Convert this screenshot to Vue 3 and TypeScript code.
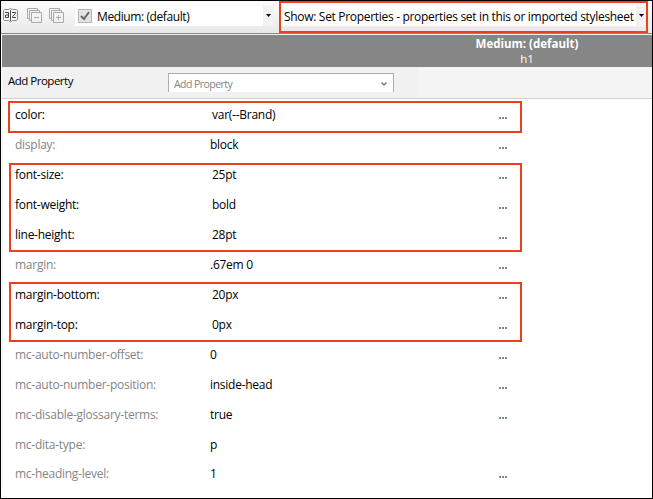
<script setup lang="ts">
interface Property {
  name: string
  value: string
  more: boolean
}
interface Group {
  kind: string
  rows: Property[]
}

const row = (name: string, value: string, more = true): Property => ({ name, value, more })

const groups: Group[] = [
  { kind: 'marked first', rows: [row('color:', 'var(--Brand)')] },
  { kind: 'plain', rows: [row('display:', 'block')] },
  {
    kind: 'marked second',
    rows: [row('font-size:', '25pt'), row('font-weight:', 'bold'), row('line-height:', '28pt')],
  },
  { kind: 'plain', rows: [row('margin:', '.67em 0')] },
  { kind: 'marked third', rows: [row('margin-bottom:', '20px'), row('margin-top:', '0px')] },
  {
    kind: 'plain',
    rows: [
      row('mc-auto-number-offset:', '0'),
      row('mc-auto-number-position:', 'inside-head'),
      row('mc-disable-glossary-terms:', 'true'),
      row('mc-dita-type:', 'p', false),
      row('mc-heading-level:', '1'),
    ],
  },
]
</script>

<template>
  <div class="window">
    <div class="toolbar">
      <svg class="icon sort" width="15" height="15" viewBox="0 0 15 15">
        <path d="M5.500 1.500h-4l-1 1v9l1 1h4l2 1.500 2-1.500h4l1-1v-9l-1-1h-4L7.500.500z" fill="#f4f4f4" stroke="#8c8c8c" />
        <path d="M7.500 2v11" stroke="#555" />
        <path d="M2 4.500h3.500v5h-3v-2.500h3M9 4.500h3.500v.8L9.500 8.700v.8h3.500" fill="none" stroke="#444" />
      </svg>
      <svg class="icon collapse" width="16" height="16" viewBox="0 0 16 16" fill="none" stroke="#aaa">
        <path d="M3 10.500H.500v-10h10V3M5 12.500H2.500v-10h10V5" />
        <path d="M4.500 4.500h10v10h-10zM7 9.500h5" />
      </svg>
      <svg class="icon expand" width="16" height="16" viewBox="0 0 16 16" fill="none" stroke="#aaa">
        <path d="M3 10.500H.500v-10h10V3M5 12.500H2.500v-10h10V5" />
        <path d="M4.500 4.500h10v10h-10zM7 9.500h5M9.500 7v5" />
      </svg>
      <div class="medium">
        <svg class="check" width="14" height="14" viewBox="0 0 14 14">
          <rect x=".5" y=".5" width="13" height="13" fill="#e3e3e3" stroke="#b5b5b5" />
          <path d="M3 7l3 3 5-7" fill="none" stroke="#666" stroke-width="2" />
        </svg>
        <span class="label">Medium: (default)</span>
        <span class="drop"><svg width="5" height="3" viewBox="0 0 5 3"><path d="M0 0h5L2.500 3z" /></svg></span>
      </div>
      <div class="show">
        <div class="field">
          <span class="label">Show: Set Properties - properties set in this or imported stylesheet</span>
          <span class="drop"><svg width="5" height="3" viewBox="0 0 5 3"><path d="M0 0h5L2.500 3z" /></svg></span>
        </div>
      </div>
    </div>

    <div class="header">
      <div class="heading">
        <b>Medium: (default)</b>
        <span>h1</span>
      </div>
    </div>

    <div class="add">
      <span class="add-label">Add Property</span>
      <div class="combo">
        <span>Add Property</span>
        <svg width="6" height="4" viewBox="0 0 6 4"><path d="M.5.5L3 3 5.500.5" fill="none" stroke="#666" stroke-width="1.200" /></svg>
      </div>
      <div class="add-rest"></div>
    </div>

    <div class="list">
      <div v-for="(group, i) in groups" :key="i" class="group" :class="group.kind">
        <div v-for="item in group.rows" :key="item.name" class="row">
          <span class="name">{{ item.name }}</span>
          <span class="value">{{ item.value }}</span>
          <span v-if="item.more" class="more"><i></i><i></i><i></i></span>
        </div>
      </div>
    </div>
  </div>
</template>

<style>
body { margin: 0; background: #fff; }
</style>

<style scoped>
.window {
  box-sizing: border-box;
  width: 653px;
  height: 499px;
  border: 1px solid #000;
  background: #fff;
  overflow: hidden;
  font: 12px/16px "Open Sans", "Noto Sans", sans-serif;
  letter-spacing: -0.26px;
  color: #000;
}
svg { display: block; flex: none; }
.toolbar {
  box-sizing: border-box;
  height: 34px;
  display: flex;
  align-items: flex-start;
  background: linear-gradient(#fdfdfd, #e8e8e8);
  border-bottom: 1px solid #eee;
  box-shadow: inset 0 -1px #888;
}
.icon { margin-top: 7px; }
.sort { margin-left: 2px; }
.collapse { margin-left: 9px; }
.expand { margin-left: 6px; }
.medium {
  display: flex;
  align-items: center;
  width: 199px;
  height: 20px;
  margin: 5px 0 0 10px;
  background: #fff;
}
.check { margin-left: 3px; }
.label { white-space: nowrap; letter-spacing: -0.31px; padding-top: 1px; }
.medium .label { margin-left: 5px; letter-spacing: -0.4px; }
.drop {
  flex: none;
  width: 11px;
  height: 20px;
  margin-left: auto;
  display: flex;
  align-items: center;
  justify-content: center;
  background: #f2f2f2;
}
.drop svg { margin-bottom: 1px; }
.show {
  box-sizing: border-box;
  width: 369px;
  height: 32px;
  margin-left: 5px;
  border: 2px solid #e7421b;
  background: linear-gradient(#fcfcfc, #e9e9ed);
}
.show .drop { width: 10px; padding-left: 1px; box-sizing: border-box; }
.field {
  display: flex;
  align-items: center;
  height: 20px;
  margin-top: 3px;
  padding-left: 3px;
  background: #fff;
}
.header {
  height: 32px;
  margin-left: 1px;
  display: flex;
  justify-content: flex-end;
  background: #868686;
  color: #fff;
}
.heading {
  width: 250px;
  display: flex;
  flex-direction: column;
  align-items: center;
  padding-top: 1px;
  font-size: 11.5px;
  line-height: 15px;
  letter-spacing: 0;
}
.add {
  box-sizing: border-box;
  display: flex;
  height: 32px;
  margin-left: 1px;
  background: #f1f1f1;
  border-bottom: 1px solid #d0d0d0;
}
.add-label {
  width: 160px;
  padding: 6px 0 0 6px;
  font-size: 11.5px;
  letter-spacing: -0.5px;
}
.combo {
  box-sizing: border-box;
  width: 226px;
  height: 19px;
  margin-top: 6px;
  display: flex;
  align-items: center;
  justify-content: space-between;
  padding: 2px 6px 0 5px;
  border: 1px solid #adadad;
  border-bottom: 0;
  background: #fff;
  color: #858585;
  font-size: 10.5px;
  letter-spacing: -0.55px;
}
.add-rest { flex: 1; margin-left: 24px; background: #f4f4f4; }
.list { padding-top: 1px; margin-left: 1px; box-shadow: inset 1px 0 #f2f2f2; }
.group { position: relative; }
.row {
  display: flex;
  align-items: center;
  height: 30px;
  padding-left: 13px;
}
.name { width: 197px; }
.value { width: 287px; }
.plain .name { color: #858585; width: 195px; }
.plain .value { width: 289px; }
.more { display: flex; gap: 1px; padding-top: 6px; }
.more i { width: 2px; height: 2px; background: linear-gradient(90deg, #b58b4d, #4d8cad); }
.plain .row:nth-child(5) { height: 28px; }
.marked::after {
  content: "";
  position: absolute;
  box-sizing: border-box;
  border: 2px solid #e7421b;
  left: 7px;
  width: 513px;
}
.first::after { left: 6px; width: 514px; top: 1px; height: 32px; }
.second::after { top: 3px; height: 89px; }
.third::after { top: 2px; height: 60px; }
</style>
